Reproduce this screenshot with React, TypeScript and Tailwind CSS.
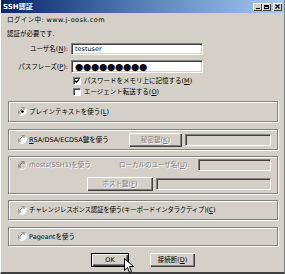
import React from 'react';

const face = '[font-family:DejaVu_Sans,Noto_Sans_CJK_JP,sans-serif]';
const dim = 'text-[#808080] [text-shadow:1px_1px_0_#fff]';

function Radio({ checked = false, disabled = false }: { checked?: boolean; disabled?: boolean }) {
  return (
    <svg width="9" height="9" viewBox="0 0 12 12" className="shrink-0">
      <path d="M10.2 1.8A6 6 0 0 0 1.8 10.2" fill="none" stroke="#808080" strokeWidth="1.2" />
      <path d="M1.8 10.2A6 6 0 0 0 10.2 1.8" fill="none" stroke="#fff" strokeWidth="1.2" />
      <circle cx="6" cy="6" r="4.6" fill={disabled ? '#d4d0c8' : '#fff'} />
      <path d="M9 3A4.4 4.4 0 0 0 3 9" fill="none" stroke="#404040" strokeWidth="1" />
      {checked && <circle cx="6" cy="6" r="1.8" fill="#000" />}
    </svg>
  );
}

function Check({ checked = false }: { checked?: boolean }) {
  return (
    <span className="w-[8px] h-[8px] bg-white border border-t-[#808080] border-l-[#808080] border-r-white border-b-white shadow-[inset_1px_1px_0_#404040] flex items-center justify-center shrink-0">
      {checked && (
        <svg width="6" height="6" viewBox="0 0 7 7">
          <path d="M1 3.2 L2.8 5 L6 1.6" fill="none" stroke="#000" strokeWidth="1.4" />
        </svg>
      )}
    </span>
  );
}

function Field({ w, h = 'h-[12px]', disabled = false, children }: { w: string; h?: string; disabled?: boolean; children?: React.ReactNode }) {
  return (
    <div
      className={`${w} ${h} ${disabled ? 'bg-[#d4d0c8]' : 'bg-white'} border border-t-[#808080] border-l-[#808080] border-r-white border-b-white shadow-[inset_1px_1px_0_#404040,inset_-1px_-1px_0_#d4d0c8] flex items-center pl-[3px] overflow-hidden shrink-0`}
    >
      {children}
    </div>
  );
}

function Btn({ w, disabled = false, def = false, children }: { w: string; disabled?: boolean; def?: boolean; children: React.ReactNode }) {
  return (
    <div
      className={`${w} h-[14px] shrink-0 flex items-center justify-center bg-[#d4d0c8] ${def ? 'border border-black' : ''} shadow-[inset_1px_1px_0_#fff,inset_-1px_-1px_0_#404040,inset_-2px_-2px_0_#808080] ${disabled ? dim : 'text-black'}`}
    >
      {children}
    </div>
  );
}

function Group({ h, children }: { h: string; children: React.ReactNode }) {
  return (
    <div className={`ml-[1px] w-[270px] ${h} border border-[#808080] shadow-[inset_1px_1px_0_#fff,1px_1px_0_#fff]`}>{children}</div>
  );
}

function U({ children }: { children: React.ReactNode }) {
  return <span className="underline underline-offset-[1px]">{children}</span>;
}

function TitleBtn({ children, gap = false }: { children: React.ReactNode; gap?: boolean }) {
  return (
    <div className={`w-[9px] h-[8px] bg-[#d4d0c8] shadow-[inset_1px_1px_0_#fff,inset_-1px_-1px_0_#404040] flex items-center justify-center ${gap ? 'ml-[2px]' : ''}`}>
      {children}
    </div>
  );
}

export default function App() {
  return (
    <div className={`w-[285px] h-[274px] bg-[#d4d0c8] ${face} text-[6.5px] leading-[10px] whitespace-nowrap text-black border-l border-l-white border-b-2 border-b-[#404040] border-r border-r-[#808080] flex flex-col`}>
      {/* title bar */}
      <div className="h-[13px] bg-gradient-to-r from-[#0a246a] via-[#5a7fb8] to-[#a6caf0] flex items-center pl-[2px] pr-[2px]">
        <span className="text-white font-bold text-[7px] leading-[10px]">SSH認証</span>
        <div className="ml-auto flex items-center">
          <TitleBtn>
            <span className="block w-[4px] h-[1px] bg-black mt-[4px]" />
          </TitleBtn>
          <TitleBtn>
            <span className="block w-[5px] h-[4px] border border-black border-t-2" />
          </TitleBtn>
          <TitleBtn gap>
            <svg width="5" height="5" viewBox="0 0 5 5">
              <path d="M0.5 0.5 L4.5 4.5 M4.5 0.5 L0.5 4.5" stroke="#000" strokeWidth="1.2" />
            </svg>
          </TitleBtn>
        </div>
      </div>

      <div className="pl-[6px] flex flex-col">
        <div className="mt-[2px] h-[10px] tracking-[0.4px]">ログイン中: www.j-oosk.com</div>
        <div className="mt-[4px] h-[10px]">認証が必要です.</div>

        <div className="mt-[4px] flex items-center">
          <div className="w-[62px] text-right pr-[1px]">
            ユーザ名(<U>N</U>):
          </div>
          <div className="ml-[2px]">
            <Field w="w-[132px]" h="h-[12px]">testuser</Field>
          </div>
        </div>

        <div className="mt-[5px] flex items-center">
          <div className="w-[62px] text-right pr-[1px]">
            パスフレーズ(<U>P</U>):
          </div>
          <div className="ml-[2px]">
            <Field w="w-[132px]" h="h-[13px]">
              <span className="text-[9.5px] tracking-[-0.3px] leading-[10px]">●●●●●●●●●</span>
            </Field>
          </div>
        </div>

        <div className="mt-[3px] ml-[66px] h-[10px] flex items-center gap-[3px]">
          <Check checked />
          <span>
            パスワードをメモリ上に記憶する(<U>M</U>)
          </span>
        </div>
        <div className="mt-[1px] ml-[66px] h-[10px] flex items-center gap-[3px]">
          <Check />
          <span>
            エージェント転送する(<U>O</U>)
          </span>
        </div>

        <div className="mt-[4px]">
          <Group h="h-[21px]">
            <div className="h-full pl-[9px] flex items-center gap-[2px]">
              <Radio checked />
              <span>
                プレインテキストを使う(<U>L</U>)
              </span>
            </div>
          </Group>
        </div>

        <div className="mt-[7px]">
          <Group h="h-[21px]">
            <div className="h-full pl-[9px] pr-[6px] flex items-center">
              <div className="flex items-center gap-[2px] w-[111px] shrink-0">
                <Radio />
                <span>
                  <U>R</U>SA/DSA/ECDSA鍵を使う
                </span>
              </div>
              <Btn w="w-[53px]" disabled>
                秘密鍵(<U>K</U>)
              </Btn>
              <div className="ml-[3px]">
                <Field w="w-[86px]" disabled />
              </div>
            </div>
          </Group>
        </div>

        <div className="mt-[6px]">
          <Group h="h-[38px]">
            <div className="pl-[9px] pr-[6px] pt-[2px] flex flex-col">
              <div className="flex items-center">
                <div className="flex items-center gap-[2px] w-[101px] shrink-0">
                  <Radio disabled />
                  <span className={dim}>rhosts(SSH1)を使う</span>
                </div>
                <span className={`${dim} w-[79px] shrink-0`}>
                  ローカルのユーザ名(<U>U</U>):
                </span>
                <Field w="w-[73px]" disabled />
              </div>
              <div className="mt-[6px] flex items-center pl-[69px]">
                <Btn w="w-[66px]" disabled>
                  ホスト鍵(<U>F</U>)
                </Btn>
                <div className="ml-[3px]">
                  <Field w="w-[115px]" disabled />
                </div>
              </div>
            </div>
          </Group>
        </div>

        <div className="mt-[6px]">
          <Group h="h-[20px]">
            <div className="h-full pl-[9px] flex items-center gap-[2px]">
              <Radio />
              <span className="tracking-[-0.3px]">
                チャレンジレスポンス認証を使う(キーボードインタラクティブ)(<U>C</U>)
              </span>
            </div>
          </Group>
        </div>

        <div className="mt-[7px]">
          <Group h="h-[19px]">
            <div className="h-full pl-[9px] flex items-center gap-[2px]">
              <Radio />
              <span>
                Pa<U>g</U>eantを使う
              </span>
            </div>
          </Group>
        </div>

        <div className="mt-[7px] flex items-center pl-[84px]">
          <div className="relative">
            <Btn w="w-[38px]" def>
              OK
            </Btn>
            <svg width="11" height="16" viewBox="0 0 11 16" className="absolute left-[33px] top-[5px]">
              <path d="M0.5 0.5 L0.5 12.5 L3.5 9.5 L5.5 14.5 L7.5 13.5 L5.5 8.5 L9.5 8.5 Z" fill="#fff" stroke="#000" strokeWidth="1" />
            </svg>
          </div>
          <div className="ml-[21px]">
            <Btn w="w-[45px]">
              接続断(<U>D</U>)
            </Btn>
          </div>
        </div>
      </div>
    </div>
  );
}
